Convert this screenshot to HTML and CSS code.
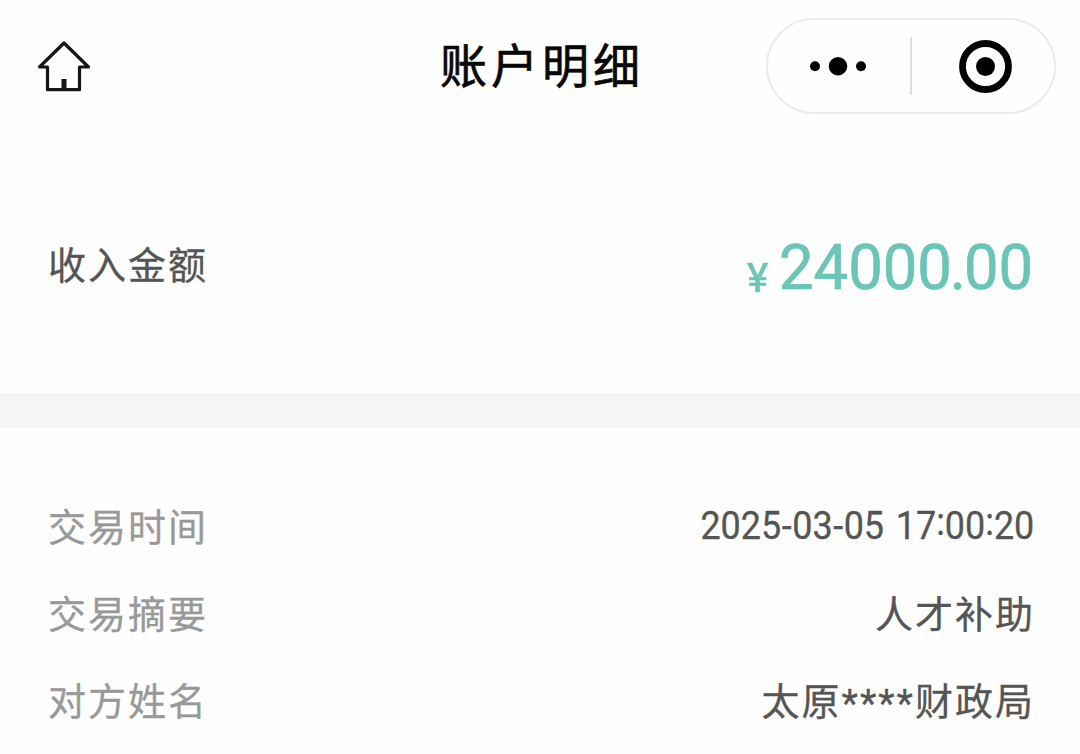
FILE: index.html
```html
<!DOCTYPE html>
<html lang="zh-CN">
<head>
<meta charset="utf-8">
<title>账户明细</title>
<link rel="stylesheet" href="styles.css">
</head>
<body>
<header class="nav">
  <svg class="home" viewBox="0 0 54 54"><path d="M27 3 L2.500 27 H10.500 V49.700 H42.500 V27 H51.500 Z"/><path class="door" d="M27 49 V39"/></svg>
  <h1 class="title">账户明细</h1>
  <div class="capsule">
    <svg class="dots" viewBox="0 0 58 20"><circle cx="6" cy="10.300" r="5"/><circle cx="29" cy="10.300" r="9.200"/><circle cx="52" cy="10.300" r="5"/></svg>
    <span class="divider"></span>
    <svg class="target" viewBox="0 0 54 54"><circle class="ring" cx="26.500" cy="27.500" r="23"/><circle cx="26.500" cy="27.500" r="9.500"/></svg>
  </div>
</header>
<section class="amount">
  <span class="amount-label">收入金额</span>
  <span class="amount-value"><span class="yen">¥</span><span class="number">2400<span class="tight">0.</span>00</span></span>
</section>
<div class="band"></div>
<main class="details">
  <div class="row"><span class="label">交易时间</span><span class="value date">2025<span class="dash">-</span>03<span class="dash">-</span>05 17<span class="colon">:</span>00<span class="colon">:</span>20</span></div>
  <div class="row"><span class="label">交易摘要</span><span class="value">人才补助</span></div>
  <div class="row"><span class="label">对方姓名</span><span class="value">太原<span class="stars">****</span>财政局</span></div>
</main>
</body>
</html>
```
FILE: styles.css
```css
* { box-sizing: border-box; }
body { margin: 0; width: 1080px; height: 754px; overflow: hidden; background: #fefefe; font-family: Roboto, "Noto Sans CJK SC", sans-serif; color: #555; }
.nav { height: 132px; padding: 18px 24px 0 37px; display: grid; grid-template-columns: 54px 1fr 290px; align-items: start; }
.home { width: 54px; height: 54px; margin-top: 22px; fill: none; stroke: #151515; stroke-width: 3.200; stroke-linejoin: round; }
.door { stroke-width: 5; }
.title { margin: 0; padding: 2px 0 0 349px; font-size: 47px; line-height: 94px; font-weight: 400; letter-spacing: 4px; color: #080808; white-space: nowrap; -webkit-text-stroke: 0.700px #080808; }
.capsule { height: 96px; border: 2px solid #ebebeb; border-radius: 48px; display: flex; align-items: center; padding-left: 41px; }
.dots { width: 58px; height: 20px; }
.divider { width: 2px; height: 58px; background: #ddd; margin: 0 47px 0 43px; }
.target { width: 54px; height: 54px; }
.ring { fill: none; stroke: #000; stroke-width: 6.800; }
.amount { height: 261px; padding: 0 48px; display: flex; justify-content: space-between; align-items: center; }
.amount-label { font-size: 38px; letter-spacing: 2px; padding-bottom: 1px; -webkit-text-stroke: 0.300px #555; }
.amount-value { display: flex; align-items: baseline; padding-top: 10px; margin-right: -1px; color: #6bc5b7; -webkit-text-stroke: 0.700px #6bc5b7; }
.yen { font-size: 40px; line-height: 40px; margin-right: 5px; transform: translateY(3px); }
.number { font-size: 63px; transform: scaleX(0.977); transform-origin: right; }
.tight { letter-spacing: -2.200px; }
.band { height: 35px; background: #f5f5f5; }
.details { padding: 57px 45px 0 48px; }
.row { height: 87px; display: flex; justify-content: space-between; line-height: 87px; font-size: 38px; }
.label { color: #999; letter-spacing: 2px; -webkit-text-stroke: 0.300px #999; }
.value { letter-spacing: 2px; -webkit-text-stroke: 0.300px #555; }
.date { letter-spacing: 0; word-spacing: 3px; line-height: 83px; transform: scaleX(0.945); transform-origin: right; margin-right: 1px; }
.dash { padding: 0 0.600px; }
.colon { display: inline-block; line-height: 1; transform: translateY(-4px); }
.stars { display: inline-block; line-height: 1; transform: translateY(2px); }
```
